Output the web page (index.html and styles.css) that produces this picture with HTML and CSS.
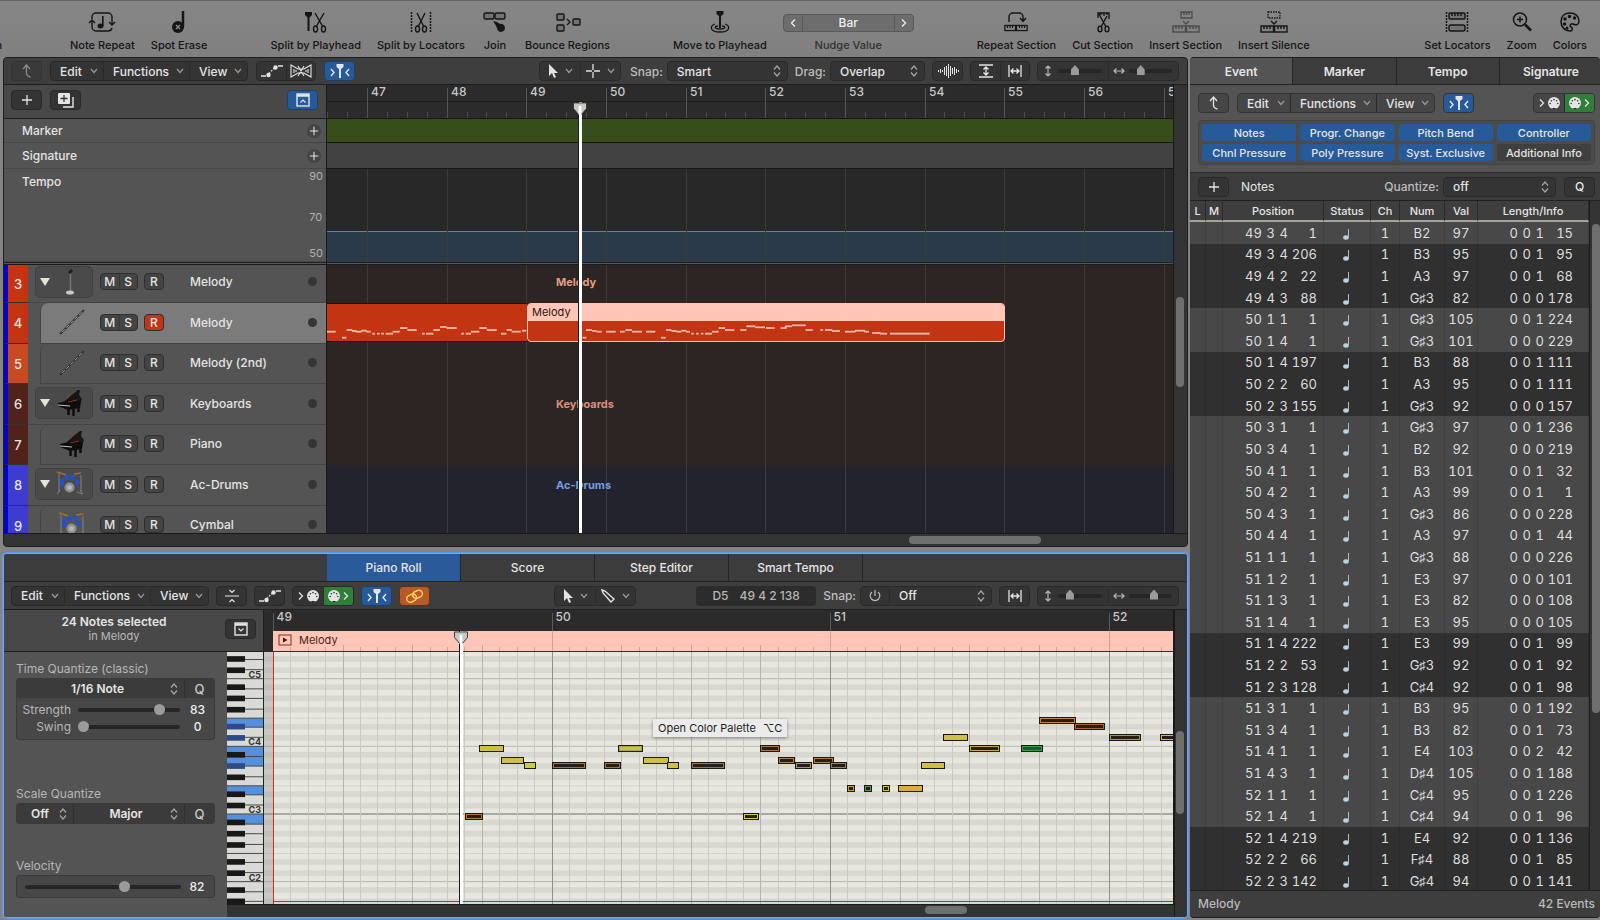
FILE: index.html
```
<!DOCTYPE html>
<html lang="en">
<head>
    <meta charset="utf-8">
    <title>Melody - Tracks</title>
    <meta name="viewport" content="width=device-width, initial-scale=1.0">
    <link rel="stylesheet" href="styles.css">
</head>
<body>
    <!-- icon set -->
    <svg class="icon-set" aria-hidden="true">
        <symbol id="i-repeat" viewBox="0 0 28 24"><g fill="none" stroke="currentColor" stroke-width="1.4"><path d="M4 9V7a4 4 0 0 1 4-4h12a4 4 0 0 1 4 4v8M4 11v6a4 4 0 0 0 4 4h12a4 4 0 0 0 4-3"/><path d="M1 13l3-3 3 3M21 12l3 3 3-3"/></g><ellipse cx="12.5" cy="16" rx="3" ry="2.5" fill="currentColor"/><path d="M14.8 16V6" stroke="currentColor" stroke-width="1.6"/></symbol>
        <symbol id="i-erase" viewBox="0 0 28 24"><circle cx="13" cy="17" r="6" fill="currentColor"/><path d="M18 17V1" stroke="currentColor" stroke-width="2.5"/><path d="M11 15l4 4M15 15l-4 4" stroke="#858585" stroke-width="1.5"/></symbol>
        <symbol id="i-splitplay" viewBox="0 0 28 24"><path d="M3 2h7v3L7.5 7.5V21h-2V7.5L3 5z" fill="currentColor"/><g fill="none" stroke="currentColor" stroke-width="1.4"><path d="M13 3l8 14M22 3l-8 14"/><ellipse cx="13.5" cy="19" rx="2" ry="3"/><ellipse cx="21.5" cy="19" rx="2" ry="3"/></g></symbol>
        <symbol id="i-splitloc" viewBox="0 0 28 24"><path d="M4.5 2v20M23.5 2v20" stroke="currentColor" stroke-width="1.5" stroke-dasharray="2 1"/><g fill="none" stroke="currentColor" stroke-width="1.4"><path d="M10 3l7 14M18 3l-7 14"/><ellipse cx="10.5" cy="19" rx="2" ry="3"/><ellipse cx="17.5" cy="19" rx="2" ry="3"/></g></symbol>
        <symbol id="i-join" viewBox="0 0 28 24"><g fill="#727272" stroke="currentColor" stroke-width="1.4"><rect x="3" y="3" width="10" height="6" rx="1.5"/><rect x="14" y="3" width="10" height="6" rx="1.5"/></g><path d="M12 11l4 1 3 2a4 4 0 1 1-3 4l-2-4z" fill="currentColor"/></symbol>
        <symbol id="i-bounce" viewBox="0 0 28 24"><g fill="#727272" stroke="currentColor" stroke-width="1.4"><rect x="3" y="4" width="7" height="6" rx="1"/><rect x="3" y="15" width="7" height="6" rx="1"/><rect x="19" y="9" width="7" height="6" rx="1"/></g><path d="M13 9l3 3-3 3" fill="none" stroke="currentColor" stroke-width="1.3"/></symbol>
        <symbol id="i-move" viewBox="0 0 28 24"><path d="M10.5 1h7v3l-2.5 2v12h-2V6l-2.5-2z" fill="currentColor"/><g fill="none" stroke="currentColor" stroke-width="1.3"><path d="M12 16c-4 0-4 3 2 3s6-3 2-3"/><path d="M9 14c-6 2-5 8 5 8s11-6 5-8"/></g></symbol>
        <symbol id="i-blocks" viewBox="0 0 28 8"><g fill="none" stroke="currentColor" stroke-width="1.4"><rect x="1" y="1" width="12.5" height="6"/><rect x="14.5" y="1" width="12.5" height="6"/><path d="M4 1v3M7 1v3M10 1v3M18 1v3M21 1v3M24 1v3"/></g></symbol>
        <symbol id="i-repsec" viewBox="0 0 28 24"><use href="#i-blocks" x="2" y="14" width="24" height="8"/><path d="M7 12V7a4 4 0 0 1 4-4h6a4 4 0 0 1 4 4v4M18 8l3 3.5L24 8" fill="none" stroke="currentColor" stroke-width="1.4"/></symbol>
        <symbol id="i-cutsec" viewBox="0 0 28 24"><g fill="none" stroke="currentColor" stroke-width="1.4"><path d="M9 8V3h11v6M12 3v2M15 3v3M18 3v2M10 4l7 13M18 6l-6 11"/><ellipse cx="11" cy="19" rx="2" ry="2.8"/><ellipse cx="18" cy="19" rx="2" ry="2.8"/></g></symbol>
        <symbol id="i-inssec" viewBox="0 0 28 24"><use href="#i-blocks" y="15" width="28" height="8"/><path d="M9 2h11v6H9zM12 2v3M14.5 2v3M17 2v3M11 11l3 3 3-3" fill="none" stroke="currentColor" stroke-width="1.3"/></symbol>
        <symbol id="i-inssil" viewBox="0 0 28 24"><use href="#i-blocks" y="15" width="28" height="8"/><path d="M8 2h12v6H8z" fill="none" stroke="currentColor" stroke-width="1.3" stroke-dasharray="1.5 1"/><path d="M11 11l3 3 3-3" fill="none" stroke="currentColor" stroke-width="1.3"/></symbol>
        <symbol id="i-setloc" viewBox="0 0 28 24"><path d="M3.5 2v20M24.5 2v20" stroke="currentColor" stroke-width="1.5" stroke-dasharray="2 1"/><g fill="#727272" stroke="currentColor" stroke-width="1.4"><rect x="6" y="3" width="16" height="6" rx="1"/><rect x="6" y="15" width="16" height="6" rx="2"/><path d="M9 3v3M12 3v3M15 3v3M18 3v3"/></g></symbol>
        <symbol id="i-zoom" viewBox="0 0 28 24"><g fill="none" stroke="currentColor" stroke-width="1.5"><circle cx="12" cy="9.5" r="6.5"/><path d="M12 6.5v6M9 9.5h6"/></g><path d="M17 14.5l6 6" stroke="currentColor" stroke-width="2.5"/></symbol>
        <symbol id="i-colors" viewBox="0 0 28 24"><path d="M14 3C8 3 5 7 5 12s4 9 9 9c3 0 3-3 1-4s0-4 2-3c4 2 6 0 6-3 0-5-4-8-9-8z" fill="none" stroke="currentColor" stroke-width="1.5"/><g fill="currentColor"><circle cx="9" cy="9" r="1.7"/><circle cx="13.5" cy="6.5" r="1.7"/><circle cx="18.5" cy="8" r="1.7"/><circle cx="8.5" cy="14" r="1.7"/><circle cx="11" cy="18" r="1.5"/></g></symbol>
        <symbol id="i-chev" viewBox="0 0 8 6"><path d="M1 1l3 3.5L7 1" fill="none" stroke="currentColor" stroke-width="1.2"/></symbol>
        <symbol id="i-updown" viewBox="0 0 8 12"><path d="M1 4.5L4 1l3 3.5M1 7.5L4 11l3-3.5" fill="none" stroke="currentColor" stroke-width="1.2"/></symbol>
        <symbol id="i-back" viewBox="0 0 16 16"><path d="M4 6l3.5-4L11 6M7.5 2v8c0 2 1 3.5 4 4" fill="none" stroke="currentColor" stroke-width="1.3"/></symbol>
        <symbol id="i-plus" viewBox="0 0 12 12"><path d="M6 1v10M1 6h10" stroke="currentColor" stroke-width="1.3"/></symbol>
        <symbol id="i-node" viewBox="0 0 22 14"><path d="M0 12h5M17 2h5" stroke="currentColor" stroke-width="1.4"/><path d="M8 9.5l5-5" stroke="currentColor" stroke-width="1.4" stroke-dasharray="1.5 1.5"/><circle cx="7.5" cy="11" r="2.2" fill="currentColor"/><circle cx="14.5" cy="3.5" r="2.2" fill="currentColor"/></symbol>
        <symbol id="i-flex" viewBox="0 0 22 14"><path d="M1 1v12l7-4h6l7 4V1l-7 4H8zM8 2l6 10M14 2L8 12M4 5v4M6 6v2M16 6v2M18 5v4" fill="none" stroke="currentColor" stroke-width="1.1"/></symbol>
        <symbol id="i-catch" viewBox="0 0 20 16"><path d="M6.5 1h7v3L11 6v9H9V6L6.5 4z" fill="currentColor"/><path d="M1 6l3 3.5L1 13M19 6l-3 3.5 3 3.5" fill="none" stroke="currentColor" stroke-width="1.4"/></symbol>
        <symbol id="i-dup" viewBox="0 0 18 16"><path d="M6 15h10V5" fill="none" stroke="currentColor" stroke-width="1.4"/><rect x="1" y="1" width="12" height="11" rx="1" fill="currentColor"/><path d="M7 3v7M3.5 6.500h7" stroke="#333" stroke-width="1.3"/></symbol>
        <symbol id="i-boxup" viewBox="0 0 14 14"><rect x="1" y="1" width="12" height="12" fill="none" stroke="currentColor" stroke-width="1.4"/><path d="M1 2.5h12" stroke="currentColor" stroke-width="2.5"/><path d="M4.5 9.500L7 7l2.500 2.500" fill="none" stroke="currentColor" stroke-width="1.2"/></symbol>
        <symbol id="i-boxdown" viewBox="0 0 14 14"><rect x="1" y="1" width="12" height="12" fill="none" stroke="currentColor" stroke-width="1.4"/><path d="M1 2.5h12" stroke="currentColor" stroke-width="2.5"/><path d="M4.5 6.500L7 9l2.500-2.500" fill="none" stroke="currentColor" stroke-width="1.2"/></symbol>
        <symbol id="i-arrow" viewBox="0 0 10 14"><path d="M1 0v12l3-3 2 5 2-1-2-4h4z" fill="currentColor"/></symbol>
        <symbol id="i-cross" viewBox="0 0 14 14"><path d="M7 0v6M7 8v6M0 7h6M8 7h6" stroke="currentColor" stroke-width="1.3"/></symbol>
        <symbol id="i-pencil" viewBox="0 0 14 14"><path d="M1 1l3 1 9 8-3 3-8-9z" fill="none" stroke="currentColor" stroke-width="1.4"/></symbol>
        <symbol id="i-wave" viewBox="0 0 22 14"><path d="M1.5 6v2M3.5 5v4M5.5 6v2M7.5 3v8M9.5 2v10M11.5 0v14M13.5 2v10M15.5 4v6M17.5 3v8M19.5 5v4M21.5 6v2" stroke="currentColor"/></symbol>
        <symbol id="i-vfit" viewBox="0 0 14 14"><path d="M0 1h14M0 13h14M7 3v8M4.5 5.500L7 3l2.500 2.500M4.500 8.500L7 11l2.500-2.500" fill="none" stroke="currentColor" stroke-width="1.3"/></symbol>
        <symbol id="i-hfit" viewBox="0 0 14 14"><path d="M1 1v12M13 1v12M3 7h8M5.5 4.500L3 7l2.500 2.500M8.500 4.500L11 7 8.500 9.500" fill="none" stroke="currentColor" stroke-width="1.3"/></symbol>
        <symbol id="i-vert" viewBox="0 0 12 12"><path d="M6 1v10M3.5 3.500L6 1l2.500 2.500M3.500 8.500L6 11l2.500-2.500" fill="none" stroke="currentColor" stroke-width="1.2"/></symbol>
        <symbol id="i-horz" viewBox="0 0 12 12"><path d="M1 6h10M3.5 3.500L1 6l2.500 2.500M8.500 3.500L11 6 8.500 8.500" fill="none" stroke="currentColor" stroke-width="1.2"/></symbol>
        <symbol id="i-midi" viewBox="0 0 12 12"><circle cx="6" cy="6" r="6" fill="currentColor"/><path d="M4.5 11h3v1h-3z" fill="#222"/><g fill="#333"><circle cx="2.2" cy="6.5" r=".8"/><circle cx="3.4" cy="3.7" r=".8"/><circle cx="6" cy="2.6" r=".8"/><circle cx="8.6" cy="3.7" r=".8"/><circle cx="9.8" cy="6.5" r=".8"/></g></symbol>
        <symbol id="i-right" viewBox="0 0 6 8"><path d="M1 .5L4.5 4 1 7.5" fill="none" stroke="currentColor" stroke-width="1.3"/></symbol>
        <symbol id="i-left" viewBox="0 0 6 8"><path d="M5 .5L1.5 4 5 7.5" fill="none" stroke="currentColor" stroke-width="1.3"/></symbol>
        <symbol id="i-collapse" viewBox="0 0 14 14"><path d="M0 7h14M4.5 1L7 3.500 9.500 1M4.500 13L7 10.500 9.500 13" fill="none" stroke="currentColor" stroke-width="1.2"/></symbol>
        <symbol id="i-link" viewBox="0 0 20 14"><g fill="none" stroke="currentColor" stroke-width="1.5" transform="rotate(-25 10 7)"><rect x="1" y="4" width="10" height="7" rx="3.5"/><rect x="8" y="3" width="10" height="7" rx="3.5"/></g></symbol>
        <symbol id="i-power" viewBox="0 0 12 12"><path d="M6 0v6M3 2a4.8 4.8 0 1 0 6 0" fill="none" stroke="currentColor" stroke-width="1.2"/></symbol>
        <symbol id="i-tri" viewBox="0 0 10 8"><path d="M0 0h10L5 8z" fill="currentColor"/></symbol>
        <symbol id="i-note" viewBox="0 0 8 12"><ellipse cx="3" cy="9.5" rx="2.8" ry="2.2" fill="#b4d3e6"/><path d="M5.5 9.500V1" stroke="#b4b8ba"/></symbol>
        <symbol id="t-mic" viewBox="0 0 28 28"><path d="M14.5 3v20" stroke="#777" stroke-width="1.5"/><path d="M13 5l3-3" stroke="#1c1c1c" stroke-width="3"/><ellipse cx="14" cy="24.5" rx="4" ry="2" fill="#c9c9c9"/></symbol>
        <symbol id="t-flute" viewBox="0 0 28 28"><path d="M2 26L26 2" stroke="#333" stroke-width="1.8"/><path d="M4 24L25 3" stroke="#999" stroke-width="1" stroke-dasharray="4 2"/></symbol>
        <symbol id="t-piano" viewBox="0 0 28 28"><path d="M9 12L17 4l5-3h2l-1 5 3 4-3 7H10z" fill="#171717"/><path d="M10 10L20 2" stroke="#7c4a2c"/><path d="M2 14l12-3 11 1-1 7-12 2-10-4z" fill="#0e0e0e"/><path d="M2 16l12 1" stroke="#c2c2c2"/><path d="M12 13l9-2" stroke="#8a2f22"/><path d="M12.500 19v7M17.500 19v8M22.500 17v6" stroke="#0e0e0e" stroke-width="2.5"/></symbol>
        <symbol id="t-drums" viewBox="0 0 28 28"><path d="M3 4v18M25 5v17M1 24l3-4M27 24l-3-4M21 22l5 2" stroke="#808080"/><path d="M1 2l9 3M18 4l7-1" stroke="#9a7040" stroke-width="1.5"/><g fill="#1f4fd6"><rect x="9" y="5" width="4" height="5" rx="1"/><rect x="15" y="5" width="4" height="5" rx="1"/><rect x="4" y="9" width="4" height="7" rx="1"/><rect x="19" y="10" width="4" height="5" rx="1"/></g><circle cx="13.500" cy="17.500" r="5" fill="#8f8f8f"/><circle cx="13.500" cy="17.500" r="2.500" fill="#b5b5b5"/></symbol>
        <symbol id="i-head" viewBox="0 0 16 14"><path d="M1 1h14v6l-5 6H6L1 7z" fill="#c4c8c2" stroke="#333"/><path d="M8 4v10" stroke="#fff" stroke-width="3"/></symbol>
    </svg>

    <header class="toolbar">
        <span class="tool-cut">n</span>
        <div class="tool-group">
            <button class="tool"><svg><use href="#i-repeat"/></svg>Note Repeat</button>
            <button class="tool"><svg><use href="#i-erase"/></svg>Spot Erase</button>
        </div>
        <div class="tool-group">
            <button class="tool"><svg><use href="#i-splitplay"/></svg>Split by Playhead</button>
            <button class="tool"><svg><use href="#i-splitloc"/></svg>Split by Locators</button>
            <button class="tool"><svg><use href="#i-join"/></svg>Join</button>
            <button class="tool"><svg><use href="#i-bounce"/></svg>Bounce Regions</button>
        </div>
        <div class="tool-group">
            <button class="tool"><svg><use href="#i-move"/></svg>Move to Playhead</button>
            <div class="nudge">
                <div class="nudge-box">
                    <button aria-label="Nudge left"><svg class="w6"><use href="#i-left"/></svg></button>
                    <button class="nudge-value">Bar</button>
                    <button aria-label="Nudge right"><svg class="w6"><use href="#i-right"/></svg></button>
                </div>
                <span>Nudge Value</span>
            </div>
        </div>
        <div class="tool-group">
            <button class="tool"><svg><use href="#i-repsec"/></svg>Repeat Section</button>
            <button class="tool"><svg><use href="#i-cutsec"/></svg>Cut Section</button>
            <button class="tool"><svg class="dim"><use href="#i-inssec"/></svg>Insert Section</button>
            <button class="tool"><svg><use href="#i-inssil"/></svg>Insert Silence</button>
        </div>
        <div class="tool-group last">
            <button class="tool"><svg><use href="#i-setloc"/></svg>Set Locators</button>
            <button class="tool"><svg><use href="#i-zoom"/></svg>Zoom</button>
            <button class="tool"><svg><use href="#i-colors"/></svg>Colors</button>
        </div>
    </header>

    <main class="workspace">
        <section class="window tracks">
            <div class="bar">
                <button class="btn dim" aria-label="Back"><svg class="w16"><use href="#i-back"/></svg></button>
                <div class="seg menus">
                    <button>Edit <svg class="chev"><use href="#i-chev"/></svg></button>
                    <button>Functions <svg class="chev"><use href="#i-chev"/></svg></button>
                    <button>View <svg class="chev"><use href="#i-chev"/></svg></button>
                </div>
                <div class="seg pair">
                    <button aria-label="Automation"><svg class="w22"><use href="#i-node"/></svg></button>
                    <button aria-label="Flex"><svg class="w22"><use href="#i-flex"/></svg></button>
                </div>
                <button class="btn blue" aria-label="Catch playhead"><svg class="w20"><use href="#i-catch"/></svg></button>
                <div class="bar-right">
                    <div class="seg picks">
                        <button aria-label="Pointer tool"><svg class="w10"><use href="#i-arrow"/></svg><svg class="chev"><use href="#i-chev"/></svg></button>
                        <button aria-label="Marquee tool"><svg class="w14"><use href="#i-cross"/></svg><svg class="chev"><use href="#i-chev"/></svg></button>
                    </div>
                    <div class="field">
                        <label for="snap">Snap:</label>
                        <div class="pick snap"><select id="snap"><option>Smart</option></select><svg class="updown"><use href="#i-updown"/></svg></div>
                    </div>
                    <div class="field">
                        <label for="drag">Drag:</label>
                        <div class="pick drag"><select id="drag"><option>Overlap</option></select><svg class="updown"><use href="#i-updown"/></svg></div>
                    </div>
                    <button class="btn" aria-label="Waveform zoom"><svg class="w22"><use href="#i-wave"/></svg></button>
                    <div class="seg pair">
                        <button aria-label="Fit vertically"><svg class="w14"><use href="#i-vfit"/></svg></button>
                        <button aria-label="Fit horizontally"><svg class="w14"><use href="#i-hfit"/></svg></button>
                    </div>
                    <div class="seg zooms">
                        <label><svg class="w12"><use href="#i-vert"/></svg><input type="range" class="zoom" value="36" aria-label="Vertical zoom"></label>
                        <label><svg class="w12"><use href="#i-horz"/></svg><input type="range" class="zoom" value="22" aria-label="Horizontal zoom"></label>
                    </div>
                </div>
            </div>
            <div class="tracks-body">
                <div class="headers">
                    <div class="head-tools">
                        <button class="btn" aria-label="Add track"><svg class="w12"><use href="#i-plus"/></svg></button>
                        <button class="btn" aria-label="Duplicate track"><svg class="w18"><use href="#i-dup"/></svg></button>
                        <button class="btn blue push" aria-label="Global tracks"><svg class="w14"><use href="#i-boxup"/></svg></button>
                    </div>
                    <div class="global marker">Marker <button class="add" aria-label="Add marker"><svg><use href="#i-plus"/></svg></button></div>
                    <div class="global signature">Signature <button class="add" aria-label="Add signature"><svg><use href="#i-plus"/></svg></button></div>
                    <div class="global tempo">Tempo
                        <div class="tempo-scale"><span>90</span><span>70</span><span>50</span></div>
                    </div>
                    <div class="split"></div>
                    <div class="track-list" id="trackList"></div>
                </div>
                <div class="timeline">
                    <div class="ruler" id="ruler"></div>
                    <div class="lane-marker"></div>
                    <div class="lane-signature"></div>
                    <div class="lane-tempo"><div class="tempo-fill"></div><svg class="grid"></svg></div>
                    <div class="split"></div>
                    <div class="lanes">
                        <div class="lane"><svg class="grid"></svg><b class="lane-name">Melody</b></div>
                        <div class="lane">
                            <svg class="grid"></svg>
                            <div class="region old"></div>
                            <div class="region current"><span>Melody</span></div>
                            <svg class="clip-notes" id="clipNotes" viewBox="0 0 2538 120"></svg>
                        </div>
                        <div class="lane"><svg class="grid"></svg></div>
                        <div class="lane"><svg class="grid"></svg><b class="lane-name">Keyboards</b></div>
                        <div class="lane"><svg class="grid"></svg></div>
                        <div class="lane drums"><svg class="grid"></svg><b class="lane-name">Ac-Drums</b></div>
                        <div class="lane drums"><svg class="grid"></svg></div>
                    </div>
                    <div class="playhead"><svg><use href="#i-head"/></svg></div>
                </div>
                <div class="scroll-y"><i class="thumb"></i></div>
            </div>
            <div class="scroll-x"><i class="thumb"></i></div>
        </section>

        <section class="window editor">
            <nav class="tabs">
                <button class="on">Piano Roll</button>
                <button>Score</button>
                <button>Step Editor</button>
                <button>Smart Tempo</button>
            </nav>
            <div class="bar">
                <div class="seg menus">
                    <button>Edit <svg class="chev"><use href="#i-chev"/></svg></button>
                    <button>Functions <svg class="chev"><use href="#i-chev"/></svg></button>
                    <button>View <svg class="chev"><use href="#i-chev"/></svg></button>
                </div>
                <button class="btn" aria-label="Collapse"><svg class="w14"><use href="#i-collapse"/></svg></button>
                <button class="btn" aria-label="Automation"><svg class="w22"><use href="#i-node"/></svg></button>
                <div class="seg pair midi">
                    <button aria-label="MIDI in"><svg class="w6"><use href="#i-right"/></svg><svg class="w12"><use href="#i-midi"/></svg></button>
                    <button class="green" aria-label="MIDI out"><svg class="w12"><use href="#i-midi"/></svg><svg class="w6"><use href="#i-right"/></svg></button>
                </div>
                <button class="btn blue" aria-label="Catch playhead"><svg class="w20"><use href="#i-catch"/></svg></button>
                <button class="btn orange" aria-label="Link"><svg class="w20"><use href="#i-link"/></svg></button>
                <div class="bar-right">
                    <div class="seg picks far">
                        <button aria-label="Pointer tool"><svg class="w10"><use href="#i-arrow"/></svg><svg class="chev"><use href="#i-chev"/></svg></button>
                        <button aria-label="Pencil tool"><svg class="w14"><use href="#i-pencil"/></svg><svg class="chev"><use href="#i-chev"/></svg></button>
                    </div>
                    <output class="readout"><span>D5</span><span>49 4 2 138</span></output>
                    <div class="field">
                        <label for="snap2">Snap:</label>
                        <div class="seg">
                            <button class="power" aria-label="Snap on"><svg class="w12"><use href="#i-power"/></svg></button>
                            <div class="pick snap2"><select id="snap2"><option>Off</option></select><svg class="updown"><use href="#i-updown"/></svg></div>
                        </div>
                    </div>
                    <button class="btn" aria-label="Fit horizontally"><svg class="w14"><use href="#i-hfit"/></svg></button>
                    <div class="seg zooms">
                        <label><svg class="w12"><use href="#i-vert"/></svg><input type="range" class="zoom" value="22" aria-label="Vertical zoom"></label>
                        <label><svg class="w12"><use href="#i-horz"/></svg><input type="range" class="zoom" value="60" aria-label="Horizontal zoom"></label>
                    </div>
                </div>
            </div>
            <div class="editor-body">
                <div class="info">
                    <div><strong>24 Notes selected</strong><span>in Melody</span></div>
                    <button class="btn" aria-label="Show panel"><svg class="w14"><use href="#i-boxdown"/></svg></button>
                </div>
                <div class="roll-head">
                    <div class="roll-ruler" id="rollRuler"></div>
                    <div class="roll-region"><svg class="play" viewBox="0 0 14 12"><rect x="1" y="1" width="12" height="10" fill="none" stroke="#6b3524"/><path d="M5 3.5v5L9.500 6z" fill="#3b1a10"/></svg>Melody<svg class="roll-ticks" id="rollTicks"></svg></div>
                </div>
                <div class="inspector">
                    <h3>Time Quantize (classic)</h3>
                    <div class="box">
                        <div class="box-row">
                            <div class="pick center"><select aria-label="Time quantize"><option>1/16 Note</option></select><svg class="updown"><use href="#i-updown"/></svg></div>
                            <button class="q">Q</button>
                        </div>
                        <div class="sliders">
                            <label for="strength">Strength</label><input type="range" id="strength" value="83"><span>83</span>
                            <label for="swing">Swing</label><input type="range" id="swing" value="0"><span>0</span>
                        </div>
                    </div>
                    <h3 class="scale">Scale Quantize</h3>
                    <div class="box">
                        <div class="box-row">
                            <div class="pick center off"><select aria-label="Scale quantize"><option>Off</option></select><svg class="updown"><use href="#i-updown"/></svg></div>
                            <div class="pick center"><select aria-label="Scale"><option>Major</option></select><svg class="updown"><use href="#i-updown"/></svg></div>
                            <button class="q">Q</button>
                        </div>
                    </div>
                    <h3 class="vel"><label for="velocity">Velocity</label></h3>
                    <div class="box velocity"><input type="range" id="velocity" max="127" value="82"><span>82</span></div>
                </div>
                <svg class="keys" id="keys"></svg>
                <div class="roll"><svg class="roll-canvas" id="roll"></svg></div>
                <div class="playhead roll-playhead"><svg><use href="#i-head"/></svg></div>
                <div class="tip">Open Color Palette <span>⌥C</span></div>
                <div class="scroll-y"><i class="thumb"></i></div>
                <div class="scroll-x"><i class="thumb"></i></div>
            </div>
        </section>

        <section class="window events">
            <nav class="tabs">
                <button class="on">Event</button>
                <button>Marker</button>
                <button>Tempo</button>
                <button>Signature</button>
            </nav>
            <div class="event-tools">
                <div class="event-bar">
                    <button class="btn" aria-label="Back"><svg class="w16"><use href="#i-back"/></svg></button>
                    <div class="seg menus">
                        <button>Edit <svg class="chev"><use href="#i-chev"/></svg></button>
                        <button>Functions <svg class="chev"><use href="#i-chev"/></svg></button>
                        <button>View <svg class="chev"><use href="#i-chev"/></svg></button>
                    </div>
                    <button class="btn blue" aria-label="Catch playhead"><svg class="w20"><use href="#i-catch"/></svg></button>
                    <div class="seg pair midi push">
                        <button aria-label="MIDI in"><svg class="w6"><use href="#i-right"/></svg><svg class="w12"><use href="#i-midi"/></svg></button>
                        <button class="green" aria-label="MIDI out"><svg class="w12"><use href="#i-midi"/></svg><svg class="w6"><use href="#i-right"/></svg></button>
                    </div>
                </div>
                <div class="filters">
                    <button>Notes</button><button>Progr. Change</button><button>Pitch Bend</button><button>Controller</button>
                    <button>Chnl Pressure</button><button>Poly Pressure</button><button>Syst. Exclusive</button><button class="none">Additional Info</button>
                </div>
            </div>
            <div class="quantize">
                <button class="btn" aria-label="Add event"><svg class="w12"><use href="#i-plus"/></svg></button>
                <span>Notes</span>
                <div class="field push">
                    <label for="quant">Quantize:</label>
                    <div class="pick quant"><select id="quant"><option>off</option></select><svg class="updown"><use href="#i-updown"/></svg></div>
                </div>
                <button class="btn">Q</button>
            </div>
            <div class="list">
                <table>
                    <colgroup><col class="c-l"><col class="c-m"><col class="c-pos"><col class="c-st"><col class="c-ch"><col class="c-num"><col class="c-val"><col></colgroup>
                    <thead><tr><th>L</th><th>M</th><th>Position</th><th>Status</th><th>Ch</th><th>Num</th><th>Val</th><th>Length/Info</th></tr></thead>
                    <tbody id="eventRows"></tbody>
                </table>
                <div class="scroll-y"><i class="thumb"></i></div>
            </div>
            <footer class="status"><span>Melody</span><span>42 Events</span></footer>
        </section>
    </main>

    <script src="script.js"></script>
</body>
</html>
```
FILE: styles.css
```
* {
    box-sizing: border-box;
}
body {
    margin: 0;
    height: 100vh;
    display: flex;
    flex-direction: column;
    overflow: hidden;
    background: #848484;
    color: #e4e4e4;
    font-family: Inter, "Liberation Sans", sans-serif;
    font-size: 12px;
    font-weight: 500;
}
button, select, input {
    font: inherit;
    color: inherit;
    margin: 0;
}
button {
    display: flex;
    align-items: center;
    justify-content: center;
    padding: 0;
    border: none;
    background: none;
    white-space: nowrap;
}
svg {
    display: block;
    flex: none;
}
.icon-set {
    position: absolute;
    width: 0;
    height: 0;
}
.w6 { width: 6px; height: 8px; }
.w10 { width: 10px; height: 14px; }
.w12 { width: 12px; height: 12px; }
.w14 { width: 14px; height: 14px; }
.w16 { width: 16px; height: 16px; }
.w18 { width: 18px; height: 16px; }
.w20 { width: 20px; height: 16px; }
.w22 { width: 22px; height: 14px; }
.push { margin-left: auto; }

/* main toolbar */
.toolbar {
    flex: none;
    display: flex;
    height: 57px;
    padding: 9px 13px 0 0;
    border-top: 1px solid #666;
    background: linear-gradient(#868686, #808080);
    color: #151515;
    font-size: 11px;
    line-height: 16px;
}
.tool-cut {
    display: flex;
    justify-content: flex-end;
    width: 2px;
    margin: 27px 68px 0 0;
    overflow: hidden;
}
.tool-group {
    display: flex;
    gap: 16px;
    margin-right: 63px;
}
.tool-group.last {
    margin: 0 0 0 auto;
}
.tool {
    flex-direction: column;
    justify-content: flex-start;
    gap: 3px;
}
.tool svg {
    width: 28px;
    height: 24px;
}
.tool .dim {
    opacity: 0.5;
}
.nudge {
    display: flex;
    flex-direction: column;
    align-items: center;
    gap: 5px;
    padding-top: 4px;
    color: #333;
}
.nudge-box {
    display: flex;
    width: 131px;
    height: 18px;
    border: 1px solid #595959;
    border-radius: 4px;
    background: #6d6d6d;
    color: #eee;
    font-size: 12px;
}
.nudge-box button {
    width: 18px;
}
.nudge-box .nudge-value {
    flex: 1;
    border: solid #595959;
    border-width: 0 1px;
}

/* windows */
.workspace {
    flex: 1;
    min-height: 0;
    display: grid;
    grid-template-columns: minmax(0, 1fr) 410px;
    grid-template-rows: minmax(0, 98fr) minmax(0, 73fr);
    gap: 6px 2px;
    padding: 0 0 2px 3px;
}
.window {
    display: flex;
    flex-direction: column;
    min-width: 0;
    overflow: hidden;
    border: 1px solid #1e1e1e;
    border-radius: 4px;
    background: #333;
}
.events {
    grid-column: 2;
    grid-row: 1 / 3;
    border-width: 1px 0 1px 0;
}
.editor {
    border-color: #6ea6f0;
    box-shadow: 0 0 0 1px #5f97e4;
}
.bar {
    flex: none;
    display: flex;
    align-items: center;
    gap: 8px;
    height: 27px;
    padding: 0 8px 0 7px;
    border-bottom: 1px solid #1e1e1e;
    background: #3e3e3e;
}
.bar-right {
    display: flex;
    align-items: center;
    gap: 7px;
    margin-left: auto;
}
.btn {
    flex: none;
    width: 31px;
    height: 20px;
    border: 1px solid #292929;
    border-radius: 4px;
    background: #343434;
}
.btn.dim {
    border-color: #333;
    background: #3a3a3a;
    color: #8b8b8b;
}
.blue {
    background: #275a99;
    border-color: #1f3f69;
}
.btn.orange {
    background: #b65a27;
    border-color: #5c3018;
    color: #f5cf62;
}
.seg {
    display: flex;
    height: 20px;
    overflow: hidden;
    border: 1px solid #292929;
    border-radius: 4px;
    background: #343434;
}
.seg > * + * {
    border-left: 1px solid #2b2b2b;
}
.menus button {
    width: 58px;
    justify-content: space-between;
    padding: 0 5px 0 9px;
}
.menus button:first-child {
    width: 52px;
}
.menus button:nth-child(2) {
    width: 86px;
}
.chev {
    width: 8px;
    height: 6px;
    color: #999;
}
.pair button {
    width: 29px;
}
.midi button {
    width: 30px;
    gap: 3px;
}
.green {
    background: #2f7f3b;
}
.picks {
    margin-right: 2px;
}
.picks.far {
    margin-right: 53px;
}
.picks button {
    width: 40px;
    gap: 7px;
}
.field {
    display: flex;
    align-items: center;
    gap: 4px;
    color: #bdbdbd;
}
.pick {
    position: relative;
    height: 20px;
    border: 1px solid #292929;
    border-radius: 4px;
    background: #343434;
    color: #e4e4e4;
}
.pick select {
    width: 100%;
    height: 100%;
    padding: 0 20px 0 9px;
    border: none;
    background: none;
    appearance: none;
}
.pick.center select {
    text-align: center;
    text-align-last: center;
}
.updown {
    position: absolute;
    top: calc(50% - 6px);
    right: 6px;
    width: 8px;
    height: 12px;
    color: #a5a5a5;
    pointer-events: none;
}
.snap { width: 121px; }
.drag { width: 95px; }
.quant { width: 113px; }
.seg .pick {
    height: 18px;
    border-width: 0 0 0 1px;
    border-radius: 0;
}
.snap2 { width: 102px; }
.power {
    width: 28px;
}
.readout {
    display: flex;
    justify-content: center;
    gap: 11px;
    width: 120px;
    height: 20px;
    border-radius: 4px;
    background: #2c2c2c;
    color: #b5b5b5;
    line-height: 20px;
}
.zooms label {
    display: flex;
    align-items: center;
    gap: 4px;
    width: 70px;
    padding: 0 6px 0 4px;
    color: #b5b5b5;
}
input[type="range"] {
    appearance: none;
    min-width: 0;
    width: 100%;
    height: 12px;
    background: none;
}
input[type="range"]::-webkit-slider-runnable-track {
    height: 4px;
    border-radius: 2px;
    background: #262626;
}
input[type="range"]::-webkit-slider-thumb {
    appearance: none;
    width: 11px;
    height: 11px;
    margin-top: -4px;
    border-radius: 50%;
    background: #9b9b9b;
}
input.zoom::-webkit-slider-thumb {
    width: 8px;
    height: 10px;
    border-radius: 0;
    clip-path: polygon(50% 0, 100% 45%, 100% 100%, 0 100%, 0 45%);
}

/* scrollbars */
.scroll-y {
    position: relative;
    background: #333;
}
.scroll-x {
    flex: none;
    position: relative;
    height: 13px;
    border-top: 1px solid #1a1a1a;
    background: #333;
}
.thumb {
    position: absolute;
    border-radius: 4px;
    background: #6f6f6f;
}
.scroll-x .thumb {
    top: 2px;
    height: 8px;
}
.scroll-y .thumb {
    left: 2px;
    width: 8px;
}
.tracks .scroll-x .thumb { right: 146px; width: 132px; }
.tracks .scroll-y .thumb { top: 212px; height: 90px; }
.events .scroll-y .thumb { top: 23px; height: 489px; }

/* tracks window */
.tracks-body {
    flex: 1;
    min-height: 0;
    display: grid;
    grid-template-columns: 323px minmax(0, 1fr) 13px;
}
.headers {
    overflow: hidden;
    border-right: 1px solid #1a1a1a;
    background: #545454;
}
.head-tools {
    display: flex;
    align-items: center;
    gap: 8px;
    height: 34px;
    padding: 0 8px 3px 7px;
    border-bottom: 1px solid #1e1e1e;
    background: #484848;
}
.global {
    display: flex;
    align-items: center;
    justify-content: space-between;
    padding: 0 5px 0 18px;
    border-bottom: 1px solid #464646;
}
.marker { height: 24px; }
.signature { height: 26px; }
.tempo {
    align-items: flex-start;
    height: 93px;
    padding-right: 3px;
    line-height: 26px;
}
.tempo-scale {
    display: grid;
    grid-template-rows: 41px 36px 12px;
    padding-top: 1px;
    color: #b2b2b2;
    font-size: 11px;
    font-weight: 400;
    line-height: 12px;
}
.add {
    width: 14px;
    height: 14px;
    border-radius: 50%;
    background: #444;
}
.add svg {
    width: 10px;
    height: 10px;
}
.split {
    height: 3px;
    border-top: 1px solid #222;
    border-bottom: 1px solid #1a1a1a;
    background: #555;
}
.track {
    display: flex;
    height: 40px;
}
.track:nth-child(even) {
    height: 41px;
}
.track:first-child {
    height: 38px;
}
.track-num {
    width: 24px;
    border-left: 4px solid #0505c8;
    border-bottom: 1px solid #333;
    display: flex;
    align-items: center;
    justify-content: center;
    font-size: 13px;
}
.red .track-num { background: #c43413; }
.rust .track-num { background: #c64b22; }
.maroon .track-num { background: #50221a; }
.indigo .track-num { background: #3d3bd0; }
.track-main {
    flex: 1;
    display: flex;
    align-items: center;
    padding: 0 9px 2px 0;
    margin-left: 12px;
    border-bottom: 1px solid #444;
}
.stack .track-main {
    margin-left: 0;
    padding-left: 7px;
}
.track:first-child .track-main {
    padding-bottom: 4px;
}
.child .track-main {
    border-left: 1px solid #444;
    border-top-left-radius: 8px;
}
.selected .track-main {
    background: #7b7b7b;
}
.track-icon {
    display: flex;
    align-items: center;
    gap: 6px;
    width: 60px;
    padding-left: 17px;
    margin-right: -1px;
}
.stack .track-icon {
    width: 58px;
    height: 32px;
    padding-left: 4px;
    margin-right: 7px;
    border: 1px solid #404040;
    border-radius: 5px;
    background: #4a4a4a;
}
.track-icon .tri {
    width: 10px;
    height: 8px;
    color: #e3e3da;
}
.track-icon .art {
    width: 28px;
    height: 28px;
}
.ms, .rec {
    display: flex;
    height: 17px;
    border: 1px solid #2f2f2f;
    border-radius: 4px;
    background: #444;
}
.ms {
    width: 38px;
    margin-right: 6px;
}
.ms button {
    flex: 1;
}
.ms button + button {
    border-left: 1px solid #383838;
}
.rec {
    width: 20px;
    margin-right: 26px;
}
.rec.armed {
    background: #c43413;
}
.dot {
    width: 9px;
    height: 9px;
    margin-left: auto;
    border-radius: 50%;
    background: #353535;
}

/* timeline */
.timeline {
    position: relative;
    overflow: hidden;
    border-right: 1px solid #1a1a1a;
    background: #2c2523;
}
.ruler {
    position: relative;
    height: 34px;
    border-bottom: 1px solid #161616;
    background: #2b2b2b;
}
.ruler svg, .grid, .roll-ticks {
    position: absolute;
    inset: 0;
    width: 100%;
    height: 100%;
}
.ruler span, .roll-ruler span {
    position: absolute;
    top: 0;
    color: #c8c8c8;
    line-height: 14px;
}
.lane-marker {
    height: 24px;
    border-bottom: 1px solid #161616;
    background: #374e1b;
}
.lane-signature {
    height: 26px;
    border-bottom: 1px solid #161616;
    background: #424242;
}
.lane-tempo {
    position: relative;
    display: flex;
    align-items: flex-end;
    height: 93px;
    background: #282828;
}
.tempo-fill {
    flex: 1;
    height: 31px;
    border-top: 1px solid #4f84cc;
    background: #2b3a4b;
}
.lane {
    position: relative;
    height: 40px;
}
.lane:nth-child(even) {
    height: 41px;
}
.lane:first-child {
    height: 38px;
}
.drums {
    background: #23232d;
}
.lane-name {
    position: absolute;
    left: 229px;
    top: 12px;
    color: #e39c84;
    font-size: 11px;
    font-weight: 700;
    line-height: 16px;
}
.lane:first-child .lane-name {
    top: 9px;
}
.lane:nth-child(4) .lane-name {
    color: #d98f79;
}
.drums .lane-name {
    color: #6f9ee0;
}
.region {
    position: absolute;
    top: 0;
    left: 0;
    width: 200px;
    height: 39px;
    background: #c33413;
    border: solid #1b1210;
    border-width: 1px 0;
}
.region.current {
    left: 200px;
    width: 478px;
    border: 1px solid #ffc6b8;
    border-radius: 4px;
    overflow: hidden;
    color: #2c1510;
    font-size: 11px;
    font-weight: 400;
    line-height: 17px;
}
.region span {
    display: block;
    padding-left: 4px;
    background: #ffc6b8;
}
.clip-notes {
    position: absolute;
    top: 0;
    left: 0;
    width: 846px;
    height: 40px;
}
.playhead {
    position: absolute;
    top: 17px;
    bottom: 0;
    left: 251px;
    width: 4px;
    border-left: 1px solid #1a1a1a;
    background: #fff;
}
.playhead svg {
    position: absolute;
    left: -7px;
    top: 0;
    width: 16px;
    height: 13px;
}

/* tabs */
.tabs {
    flex: none;
    display: flex;
    height: 28px;
    border-bottom: 1px solid #222;
    background: #3c3c3c;
}
.tabs button {
    border-right: 1px solid #252525;
}
.editor .tabs {
    padding-left: 323px;
}
.editor .tabs button {
    width: 134px;
}
.editor .tabs .on {
    background: #2a5a99;
}
.editor .bar {
    gap: 7px;
    height: 28px;
}
.events .tabs {
    height: 27px;
    margin-right: -3px;
}
.events .tabs button {
    flex: 1;
    font-weight: 600;
}
.events .tabs .on {
    background: #545454;
}

/* piano roll */
.editor-body {
    flex: 1;
    min-height: 0;
    position: relative;
    display: grid;
    grid-template-columns: 223px 37px minmax(0, 1fr) 13px;
    grid-template-rows: 42px minmax(0, 1fr) 13px;
}
.info {
    grid-column: 1 / 3;
    display: flex;
    align-items: center;
    justify-content: space-between;
    padding: 0 7px 3px 0;
    border: solid #1e1e1e;
    border-width: 0 1px 1px 0;
    background: #484848;
}
.info div {
    width: 220px;
    text-align: center;
    line-height: 14px;
}
.info strong {
    display: block;
    font-weight: 600;
}
.info span {
    color: #b9b9b9;
    font-size: 11px;
    font-weight: 400;
}
.roll-head {
    overflow: hidden;
    border-right: 1px solid #1a1a1a;
    background: #2b2b2b;
}
.roll-ruler {
    position: relative;
    height: 21px;
    overflow: hidden;
}
.roll-ruler svg {
    width: 100%;
    height: 21px;
}
.roll-region {
    position: relative;
    display: flex;
    align-items: center;
    gap: 7px;
    height: 21px;
    margin-left: 9px;
    padding: 0 0 2px 5px;
    border-bottom: 1px solid #333;
    background: #ffc6b8;
    color: #4a2418;
    font-size: 11px;
    font-weight: 400;
}
.play {
    width: 14px;
    height: 12px;
}
.inspector {
    grid-column: 1;
    grid-row: 2 / 4;
    padding: 8px 12px;
    background: #545454;
}
.inspector h3 {
    margin: 0;
    color: #b6b6b6;
    font-size: 12px;
    font-weight: 400;
    line-height: 18px;
}
.inspector .scale {
    margin-top: 45px;
}
.inspector .vel {
    margin-top: 33px;
}
.box {
    border: 1px solid #3a3a3a;
    border-radius: 3px;
    background: #474747;
}
.box-row {
    display: flex;
    height: 19px;
    background: #3b3b3b;
}
.box-row .pick {
    flex: 1;
    height: 19px;
    border: none;
    border-right: 1px solid #303030;
    border-radius: 0;
    background: none;
}
.box-row .pick select {
    padding-left: 14px;
    font-weight: 600;
}
.box-row .off {
    flex: none;
    width: 57px;
}
.box-row .off select {
    padding: 0 16px 0 6px;
}
.q {
    width: 29px;
    color: #c9c9c9;
    font-size: 13px;
}
.sliders {
    display: grid;
    grid-template-columns: 54px 102px 1fr;
    align-items: center;
    column-gap: 7px;
    height: 41px;
    padding: 3px 6px 3px 0;
    line-height: 16px;
    font-weight: 400;
    text-align: right;
    color: #b6b6b6;
}
.sliders span, .velocity span {
    color: #eee;
    font-weight: 500;
    text-align: center;
}
.velocity {
    display: flex;
    align-items: center;
    height: 23px;
    padding-left: 8px;
}
.velocity span {
    width: 32px;
}
.velocity input {
    width: 156px;
}
.keys {
    grid-column: 2;
    grid-row: 2;
    width: 37px;
    height: 100%;
    overflow: hidden;
    border-right: 1px solid #222;
}
.roll {
    grid-column: 3;
    grid-row: 2;
    overflow: hidden;
    border-right: 1px solid #1a1a1a;
}
.roll-canvas {
    width: 100%;
    height: 100%;
}
.editor .scroll-y {
    grid-column: 4;
    grid-row: 1 / 4;
    border-left: 1px solid #1a1a1a;
}
.editor .scroll-y .thumb {
    top: 121px;
    left: 1px;
    height: 83px;
}
.editor .scroll-x {
    grid-column: 2 / 4;
    grid-row: 3;
}
.editor .scroll-x .thumb {
    top: 1px;
    right: 207px;
    width: 42px;
}
.roll-playhead {
    top: 21px;
    bottom: 13px;
    left: 455px;
}
.tip {
    position: absolute;
    left: 649px;
    top: 109px;
    padding: 0 5px;
    background: #ebebeb;
    box-shadow: 0 1px 3px rgba(0, 0, 0, 0.4);
    color: #222;
    font-size: 11px;
    font-weight: 400;
    line-height: 18px;
    white-space: nowrap;
}
.tip span {
    margin-left: 4px;
}

/* event list */
.event-tools {
    flex: none;
    padding: 8px 5px 7px 8px;
    border-bottom: 1px solid #2a2a2a;
    background: #545454;
}
.event-bar {
    display: flex;
    gap: 8px;
    margin-bottom: 7px;
}
.event-bar .btn, .event-bar .seg {
    background: #464646;
    border-color: #343434;
}
.event-bar .btn.blue {
    background: #275a99;
}
.filters {
    display: grid;
    grid-template-columns: repeat(4, 1fr);
    gap: 3px 4px;
    padding: 3px;
    border: 1px solid #434343;
    border-radius: 4px;
    background: #4b4b4b;
}
.filters button {
    height: 17px;
    border-radius: 3px;
    background: #275a99;
    font-size: 11px;
}
.filters .none {
    background: #3f3f3f;
}
.quantize {
    flex: none;
    display: flex;
    align-items: center;
    gap: 8px;
    height: 28px;
    padding: 0 5px 0 8px;
    border-bottom: 1px solid #222;
    background: #3c3c3c;
}
.quantize > span {
    margin-left: 4px;
    font-weight: 400;
}
.list {
    flex: 1;
    min-height: 0;
    display: grid;
    grid-template-columns: minmax(0, 1fr) 11px;
    grid-template-rows: minmax(0, 1fr);
    overflow: hidden;
}
table {
    width: 100%;
    height: calc(100% + 2px);
    border-collapse: separate;
    border-spacing: 0;
    table-layout: fixed;
    background: #303030;
    font-variant-numeric: tabular-nums;
}
.c-l { width: 16px; }
.c-m { width: 17px; }
.c-pos { width: 101px; }
.c-st { width: 47px; }
.c-ch { width: 29px; }
.c-num { width: 45px; }
.c-val { width: 33px; }
th {
    height: 21px;
    padding: 0;
    border-right: 1px solid #2b2b2b;
    border-bottom: 2px solid #a3a39b;
    background: #3e3e3e;
    font-size: 11px;
    font-weight: 500;
    line-height: 14px;
}
td {
    height: 3%;
    padding: 0;
    border-right: 1px solid #2a2a2a;
    color: #dedede;
    font-weight: 400;
    font-size: 13px;
    line-height: 16px;
    text-align: center;
}
tr.lit td {
    background: #484848;
    border-right-color: #404040;
}
td svg {
    width: 8px;
    height: 12px;
    margin: 2px auto 0;
}
.cells {
    display: grid;
    grid-template-columns: 16px 14px 13px 29px;
    justify-content: end;
    padding-right: 6px;
    text-align: right;
}
.cells.length {
    grid-template-columns: 13px 13px 13px 29px;
    padding-right: 15px;
}
.events .scroll-y {
    border-left: 1px solid #1e1e1e;
}
.status {
    flex: none;
    display: flex;
    justify-content: space-between;
    padding: 0 5px 0 8px;
    border-top: 1px solid #222;
    background: #3e3e3e;
    color: #b9b9b9;
    line-height: 26px;
}
```
FILE: script.js
```
const NS = 'http://www.w3.org/2000/svg';

function add(parent, tag, attrs) {
    const el = document.createElementNS(NS, tag);
    for (const key in attrs) el.setAttribute(key, attrs[key]);
    parent.appendChild(el);
    return el;
}

function line(parent, x1, y1, x2, y2, stroke, width = 1) {
    add(parent, 'line', { x1, y1, x2, y2, stroke, 'stroke-width': width });
}

// bar number labels
function label(parent, x, text) {
    const span = document.createElement('span');
    span.style.left = x + 'px';
    span.textContent = text;
    parent.appendChild(span);
}

// ---- track headers ----
const tracks = [
    [3, 'Melody', 'red', 'mic', 'stack'],
    [4, 'Melody', 'red', 'flute', 'child selected'],
    [5, 'Melody (2nd)', 'rust', 'flute', 'child'],
    [6, 'Keyboards', 'maroon', 'piano', 'stack'],
    [7, 'Piano', 'maroon', 'piano', 'child'],
    [8, 'Ac-Drums', 'indigo', 'drums', 'stack'],
    [9, 'Cymbal', 'indigo', 'drums', 'child']
];
document.getElementById('trackList').innerHTML = tracks.map(([num, name, color, art, kind]) => `
    <div class="track ${color} ${kind}">
        <div class="track-num">${num}</div>
        <div class="track-main">
            <div class="track-icon">
                ${kind === 'stack' ? '<svg class="tri"><use href="#i-tri"/></svg>' : ''}
                <svg class="art"><use href="#t-${art}"/></svg>
            </div>
            <div class="ms"><button>M</button><button>S</button></div>
            <button class="rec ${kind.includes('selected') ? 'armed' : ''}">R</button>
            <span>${name}</span>
            <i class="dot"></i>
        </div>
    </div>`).join('');

// ---- tracks ruler and bar lines ----
const BAR = 79.65;
const ruler = document.getElementById('ruler');
const rulerSvg = add(ruler, 'svg', {});
line(rulerSvg, 0, 16.5, 4000, 16.5, '#1c1c1c');
for (let i = -2; i < 120; i++) {
    const x = Math.round(40 + i * BAR / 4) + 0.5;
    line(rulerSvg, x, i % 4 === 0 ? 3 : 27, x, 33, i % 4 === 0 ? '#555' : '#4c4c4c');
    if (i >= 0 && i % 4 === 0) label(ruler, Math.round(x + 3), 47 + i / 4);
}
document.querySelectorAll('.grid').forEach(svg => {
    for (let i = 0; i < 30; i++) {
        const x = Math.round(40 + i * BAR) + 0.5;
        line(svg, x, 0, x, 100, '#3c3b3b');
    }
});

// ---- notes drawn inside the regions, 3 units per pixel: [start, end, y] ----
const clip = [
    [0, 26, 86], [45, 58, 104], [59, 76, 81], [75, 89, 84], [87, 104, 86], [103, 119, 83], [118, 131, 86],
    [136, 144, 92], [150, 158, 92], [163, 171, 92], [176, 198, 92], [197, 218, 86], [219, 241, 75], [241, 269, 81],
    [285, 293, 92], [297, 319, 92], [319, 339, 81], [339, 359, 72], [359, 389, 75], [403, 411, 92], [416, 432, 92],
    [432, 457, 86], [457, 479, 75], [479, 509, 81], [522, 538, 92], [539, 554, 81], [554, 581, 86], [585, 598, 83],
    [767, 778, 104], [777, 795, 81], [795, 809, 84], [809, 824, 86], [837, 866, 86], [879, 893, 86], [895, 915, 81],
    [915, 945, 86], [957, 985, 86], [1002, 1016, 104], [1017, 1033, 81], [1033, 1049, 84], [1049, 1063, 86],
    [1063, 1077, 83], [1077, 1089, 86], [1093, 1100, 92], [1107, 1115, 92], [1122, 1129, 92], [1134, 1155, 92],
    [1155, 1175, 86], [1175, 1194, 75], [1194, 1222, 81], [1240, 1258, 81], [1258, 1285, 70], [1285, 1314, 73],
    [1317, 1343, 75], [1361, 1379, 75], [1374, 1395, 70], [1395, 1436, 67], [1436, 1457, 81], [1480, 1488, 81],
    [1494, 1516, 81], [1515, 1539, 84], [1554, 1586, 86], [1584, 1614, 83], [1612, 1626, 86], [1635, 1661, 90],
    [1659, 1680, 92], [1689, 1808, 92]
];
const clipNotes = document.getElementById('clipNotes');
clip.forEach(([x1, x2, y]) => line(clipNotes, x1, y, x2, y, '#ffc6b8', 5));

// ---- piano roll ----
const ROW = 5.637;      // one semitone
const C5 = 26.7;        // lower edge of C5
const ROLL_BAR = 278.5;
const BAR49 = 9;
const isBlack = n => [1, 3, 6, 8, 10].includes(((n % 12) + 12) % 12);

const rollRuler = document.getElementById('rollRuler');
const rollRulerSvg = add(rollRuler, 'svg', {});
for (let i = 0; i < 8; i++) {
    const x = Math.round(BAR49 + i * ROLL_BAR) + 0.5;
    line(rollRulerSvg, x, 3, x, 21, '#5a5a5a');
    label(rollRuler, x + 3, 49 + i);
}
const rollTicks = document.getElementById('rollTicks');
for (let i = 1; i < 120; i++) {
    const x = Math.round(i * ROLL_BAR / 16) + 0.5;
    line(rollTicks, x, i % 16 === 0 ? 0 : i % 4 === 0 ? 14 : 16, x, 21, '#d3a296');
}

const roll = document.getElementById('roll');
add(roll, 'rect', { width: '100%', height: '100%', fill: '#e7e7e0' });
for (let n = -45; n < 6; n++) {
    const top = C5 - (n + 1) * ROW;
    if (isBlack(n)) add(roll, 'rect', { x: 0, y: top, width: '100%', height: ROW, fill: '#d8d8d1' });
    if (n % 12 === 0) line(roll, 0, top + ROW, 4000, top + ROW, '#b4b6b1');
    if (((n % 12) + 12) % 12 === 5) line(roll, 0, top + ROW, 4000, top + ROW, '#d2d2cc');
}
line(roll, 0, C5 + 24 * ROW, 4000, C5 + 24 * ROW, '#a5aaa5', 2);
add(roll, 'rect', { x: 0, y: 0, width: BAR49, height: '100%', fill: '#8f938e', opacity: 0.35 });
for (let i = 1; i < 120; i++) {
    const x = Math.round(BAR49 + i * ROLL_BAR / 16) + 0.5;
    line(roll, x, 0, x, 260, i % 16 === 0 ? '#8e918d' : i % 4 === 0 ? '#b3b5b0' : '#cacac4');
}

// [x, y, width, fill, edge] with fill "dark" for selected notes
const yellow = '#cfc042';
const notes = [
    [201, 161, 18, 'dark', '#b07a44'], [215, 93, 25, yellow, yellow], [237, 105, 23, yellow, yellow],
    [260, 110, 12, '#c5cf42', '#c5cf42'], [288, 110, 34, 'dark', '#a5714a'], [340, 110, 17, 'dark', '#a5714a'],
    [354, 93, 25, yellow, '#9dab3a'], [379, 105, 26, yellow, yellow], [403, 110, 12, yellow, yellow],
    [427, 110, 34, 'dark', '#a5714a'], [479, 161, 16, 'dark', '#d8c83e'], [496, 93, 20, 'dark', '#a8744a'],
    [514, 105, 17, 'dark', '#b07d4a'], [531, 110, 17, 'dark', '#a5a03c'], [549, 105, 21, 'dark', '#b07d4a'],
    [566, 110, 17, 'dark', '#8a8a3c'], [583, 133, 8, 'dark', '#cc9c44'], [600, 133, 8, 'dark', '#4b9a50'],
    [618, 133, 8, 'dark', '#cfc042'], [634, 133, 25, '#dcac3c', '#dcac3c'], [657, 110, 24, yellow, yellow],
    [679, 82, 25, yellow, yellow], [705, 93, 31, 'dark', '#c5a648'], [757, 93, 22, '#1d5c2a', '#3f9a4a'],
    [775, 65, 37, 'dark', '#c08a4a'], [810, 71, 31, 'dark', '#a8643c'], [845, 82, 32, 'dark', '#98a03c'],
    [896, 82, 32, 'dark', '#cfc042']
];
notes.forEach(([x, y, w, fill, edge]) => {
    add(roll, 'rect', { x: x + 0.5, y: y + 0.5, width: w - 1, height: 6, fill: edge, stroke: '#1c1a10' });
    if (fill !== edge) {
        add(roll, 'rect', { x: x + 2, y: y + 2, width: w - 4, height: 3, fill: fill === 'dark' ? '#2a1d14' : fill });
    }
});
line(roll, BAR49 + 0.5, 0, BAR49 + 0.5, 260, '#c33413');
line(roll, BAR49, 249.5, 4000, 249.5, '#c33413');

// ---- keyboard ----
const keys = document.getElementById('keys');
add(keys, 'rect', { width: 37, height: 260, fill: '#d9d9d5' });
// edges of the white keys inside an octave, in semitones above C
const white = { 0: [0, 1.6], 2: [1.6, 3.4], 4: [3.4, 5], 5: [5, 6.6], 7: [6.6, 8.5], 9: [8.5, 10.2], 11: [10.2, 12] };
const held = [-8, -13, -15, -20, -25];
const heldBlack = [-9, -11, -16];
for (let n = -48; n < 6; n++) {
    const step = ((n % 12) + 12) % 12;
    if (!(step in white)) continue;
    const base = C5 - (n - step) * ROW;
    const top = base - white[step][1] * ROW;
    const bottom = base - white[step][0] * ROW;
    if (held.includes(n)) add(keys, 'rect', { x: 0, y: top, width: 37, height: bottom - top, fill: '#5590dc' });
    line(keys, 0, bottom, 37, bottom, '#4a4a4a');
    if (step === 0) {
        add(keys, 'text', { x: 34, y: bottom - 1, 'text-anchor': 'end', 'font-size': 9, 'font-weight': 700, fill: '#333' }).textContent = 'C' + (5 + n / 12);
    }
}
for (let n = -48; n < 6; n++) {
    if (isBlack(n)) add(keys, 'rect', { x: 0, y: C5 - (n + 1) * ROW, width: 18, height: ROW, fill: heldBlack.includes(n) ? '#2b4a86' : '#181818' });
}

// ---- event list: position, tick, note, velocity, length, length ticks ----
const events = [
    ['49 3 4', 1, 'B2', 97, '0 0 1', 15], ['49 3 4', 206, 'B3', 95, '0 0 1', 95], ['49 4 2', 22, 'A3', 97, '0 0 1', 68],
    ['49 4 3', 88, 'G♯3', 82, '0 0 0', 178], ['50 1 1', 1, 'G♯3', 105, '0 0 1', 224], ['50 1 4', 1, 'G♯3', 101, '0 0 0', 229],
    ['50 1 4', 197, 'B3', 88, '0 0 1', 111], ['50 2 2', 60, 'A3', 95, '0 0 1', 111], ['50 2 3', 155, 'G♯3', 92, '0 0 0', 157],
    ['50 3 1', 1, 'G♯3', 97, '0 0 1', 236], ['50 3 4', 1, 'B2', 92, '0 0 0', 219], ['50 4 1', 1, 'B3', 101, '0 0 1', 32],
    ['50 4 2', 1, 'A3', 99, '0 0 1', 1], ['50 4 3', 1, 'G♯3', 86, '0 0 0', 228], ['50 4 4', 1, 'A3', 97, '0 0 1', 44],
    ['51 1 1', 1, 'G♯3', 88, '0 0 0', 226], ['51 1 2', 1, 'E3', 97, '0 0 0', 101], ['51 1 3', 1, 'E3', 82, '0 0 0', 108],
    ['51 1 4', 1, 'E3', 95, '0 0 0', 105], ['51 1 4', 222, 'E3', 99, '0 0 1', 99], ['51 2 2', 53, 'G♯3', 92, '0 0 1', 92],
    ['51 2 3', 128, 'C♯4', 92, '0 0 1', 98], ['51 3 1', 1, 'B3', 95, '0 0 1', 192], ['51 3 4', 1, 'B3', 82, '0 0 1', 73],
    ['51 4 1', 1, 'E4', 103, '0 0 2', 42], ['51 4 3', 1, 'D♯4', 105, '0 0 1', 188], ['52 1 1', 1, 'C♯4', 95, '0 0 1', 226],
    ['52 1 4', 1, 'C♯4', 94, '0 0 1', 96], ['52 1 4', 219, 'E4', 92, '0 0 1', 136], ['52 2 2', 66, 'F♯4', 88, '0 0 1', 85],
    ['52 2 3', 142, 'G♯4', 94, '0 0 1', 141]
];
const cells = (text, tick) => [...text.split(' '), tick].map(t => `<span>${t}</span>`).join('');
document.getElementById('eventRows').innerHTML = events.map(([pos, tick, note, vel, len, lenTick]) => `
    <tr class="${tick === 1 ? 'lit' : ''}">
        <td></td><td></td>
        <td><div class="cells">${cells(pos, tick)}</div></td>
        <td><svg><use href="#i-note"/></svg></td>
        <td>1</td><td>${note}</td><td>${vel}</td>
        <td><div class="cells length">${cells(len, lenTick)}</div></td>
    </tr>`).join('');
```
